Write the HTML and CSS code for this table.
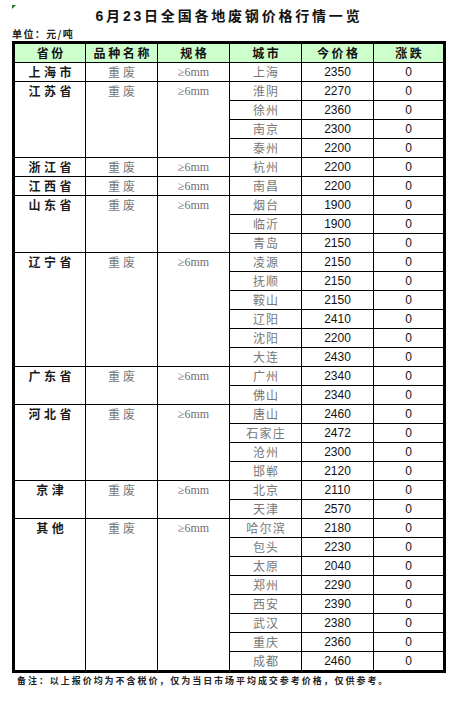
FILE: index.html
```html
<!DOCTYPE html>
<html lang="zh-CN">
<head>
<meta charset="utf-8">
<title>6月23日全国各地废钢价格行情一览</title>
<link rel="stylesheet" href="styles.css">
</head>
<body>
<div class="page">
  <span class="marker"></span>
  <h1 class="title">6月23日全国各地废钢价格行情一览</h1>
  <div class="unit">单位：元/吨</div>
  <table class="grid">
    <colgroup>
      <col class="c72"><col class="c72"><col class="c72"><col class="c72"><col class="c72"><col class="c71">
    </colgroup>
    <thead>
      <tr class="head">
        <th>省份</th><th>品种名称</th><th>规格</th><th>城市</th><th>今价格</th><th>涨跌</th>
      </tr>
    </thead>
    <tbody>
      <tr><td class="prov">上海市</td><td class="kind">重废</td><td class="spec">≥6mm</td><td class="city">上海</td><td class="num">2350</td><td class="num">0</td></tr>

      <tr><td class="prov" rowspan="4">江苏省</td><td class="kind" rowspan="4">重废</td><td class="spec" rowspan="4">≥6mm</td><td class="city">淮阴</td><td class="num">2270</td><td class="num">0</td></tr>
      <tr><td class="city">徐州</td><td class="num">2360</td><td class="num">0</td></tr>
      <tr><td class="city">南京</td><td class="num">2300</td><td class="num">0</td></tr>
      <tr><td class="city">泰州</td><td class="num">2200</td><td class="num">0</td></tr>

      <tr><td class="prov">浙江省</td><td class="kind">重废</td><td class="spec">≥6mm</td><td class="city">杭州</td><td class="num">2200</td><td class="num">0</td></tr>
      <tr><td class="prov">江西省</td><td class="kind">重废</td><td class="spec">≥6mm</td><td class="city">南昌</td><td class="num">2200</td><td class="num">0</td></tr>

      <tr><td class="prov" rowspan="3">山东省</td><td class="kind" rowspan="3">重废</td><td class="spec" rowspan="3">≥6mm</td><td class="city">烟台</td><td class="num">1900</td><td class="num">0</td></tr>
      <tr><td class="city">临沂</td><td class="num">1900</td><td class="num">0</td></tr>
      <tr><td class="city">青岛</td><td class="num">2150</td><td class="num">0</td></tr>

      <tr><td class="prov" rowspan="6">辽宁省</td><td class="kind" rowspan="6">重废</td><td class="spec" rowspan="6">≥6mm</td><td class="city">凌源</td><td class="num">2150</td><td class="num">0</td></tr>
      <tr><td class="city">抚顺</td><td class="num">2150</td><td class="num">0</td></tr>
      <tr><td class="city">鞍山</td><td class="num">2150</td><td class="num">0</td></tr>
      <tr><td class="city">辽阳</td><td class="num">2410</td><td class="num">0</td></tr>
      <tr><td class="city">沈阳</td><td class="num">2200</td><td class="num">0</td></tr>
      <tr><td class="city">大连</td><td class="num">2430</td><td class="num">0</td></tr>

      <tr><td class="prov" rowspan="2">广东省</td><td class="kind" rowspan="2">重废</td><td class="spec" rowspan="2">≥6mm</td><td class="city">广州</td><td class="num">2340</td><td class="num">0</td></tr>
      <tr><td class="city">佛山</td><td class="num">2340</td><td class="num">0</td></tr>

      <tr><td class="prov" rowspan="4">河北省</td><td class="kind" rowspan="4">重废</td><td class="spec" rowspan="4">≥6mm</td><td class="city">唐山</td><td class="num">2460</td><td class="num">0</td></tr>
      <tr><td class="city">石家庄</td><td class="num">2472</td><td class="num">0</td></tr>
      <tr><td class="city">沧州</td><td class="num">2300</td><td class="num">0</td></tr>
      <tr><td class="city">邯郸</td><td class="num">2120</td><td class="num">0</td></tr>

      <tr><td class="prov" rowspan="2">京津</td><td class="kind" rowspan="2">重废</td><td class="spec" rowspan="2">≥6mm</td><td class="city">北京</td><td class="num">2110</td><td class="num">0</td></tr>
      <tr><td class="city">天津</td><td class="num">2570</td><td class="num">0</td></tr>

      <tr><td class="prov" rowspan="8">其他</td><td class="kind" rowspan="8">重废</td><td class="spec" rowspan="8">≥6mm</td><td class="city">哈尔滨</td><td class="num">2180</td><td class="num">0</td></tr>
      <tr><td class="city">包头</td><td class="num">2230</td><td class="num">0</td></tr>
      <tr><td class="city">太原</td><td class="num">2040</td><td class="num">0</td></tr>
      <tr><td class="city">郑州</td><td class="num">2290</td><td class="num">0</td></tr>
      <tr><td class="city">西安</td><td class="num">2390</td><td class="num">0</td></tr>
      <tr><td class="city">武汉</td><td class="num">2380</td><td class="num">0</td></tr>
      <tr><td class="city">重庆</td><td class="num">2360</td><td class="num">0</td></tr>
      <tr><td class="city">成都</td><td class="num">2460</td><td class="num">0</td></tr>
    </tbody>
  </table>
  <p class="note">备注：以上报价均为不含税价，仅为当日市场平均成交参考价格，仅供参考。</p>
</div>
</body>
</html>
```

FILE: styles.css
```css
html, body {
  margin: 0;
  padding: 0;
  background: #ffffff;
}

body {
  font-family: "Liberation Sans", "Noto Sans CJK SC", sans-serif;
  color: #111111;
}

.page {
  position: relative;
  width: 450px;
  padding: 6px 0 0 12px;
  box-sizing: border-box;
}

.marker {
  position: absolute;
  left: 12px;
  top: 5px;
  width: 0;
  height: 0;
  border-top: 4px solid #1f7a1f;
  border-right: 4px solid transparent;
}

.title {
  margin: 0;
  width: 434px;
  text-align: center;
  font-size: 14px;
  line-height: 20px;
  font-weight: 700;
  letter-spacing: 2.8px;
  padding-left: 0;
  box-sizing: border-box;
  color: #111111;
}

.unit {
  font-family: "Noto Sans CJK SC", sans-serif;
  font-size: 10px;
  line-height: 14px;
  font-weight: 700;
  letter-spacing: 1.4px;
  color: #222222;
  margin-top: 1px;
}

.grid {
  border-collapse: collapse;
  table-layout: fixed;
  width: 434px;
  border: 3px solid #000000;
}

.c72 { width: 72px; }
.c71 { width: 71px; }

.grid th,
.grid td {
  border: 1px solid #000000;
  padding: 0;
  height: 18px;
  line-height: 18px;
  text-align: center;
  vertical-align: top;
  white-space: nowrap;
  overflow: hidden;
}

.head th {
  background: #ccffcc;
  font-family: "Noto Sans CJK SC", sans-serif;
  font-size: 12px;
  font-weight: 700;
  letter-spacing: 2.6px;
  text-indent: 2.6px;
  color: #111111;
}

.prov {
  font-family: "Noto Sans CJK SC", sans-serif;
  font-size: 12px;
  font-weight: 700;
  letter-spacing: 3.6px;
  text-indent: 3.6px;
  color: #1a1a1a;
}

.kind {
  font-family: "Noto Sans CJK SC", sans-serif;
  font-size: 12px;
  letter-spacing: 3px;
  text-indent: 3px;
  color: #777777;
}

.spec {
  font-family: "Liberation Serif", "DejaVu Serif", serif;
  font-size: 12px;
  color: #707070;
}

.city {
  font-family: "Noto Sans CJK SC", sans-serif;
  font-size: 12px;
  letter-spacing: 1.2px;
  text-indent: 1.2px;
  color: #777777;
}

.num {
  font-family: "Liberation Sans", sans-serif;
  font-size: 12px;
  color: #111111;
}

.note {
  margin: 2px 0 0 5px;
  font-family: "Noto Sans CJK SC", sans-serif;
  font-size: 9px;
  line-height: 12px;
  font-weight: 700;
  letter-spacing: 1.95px;
  color: #222222;
}
```
